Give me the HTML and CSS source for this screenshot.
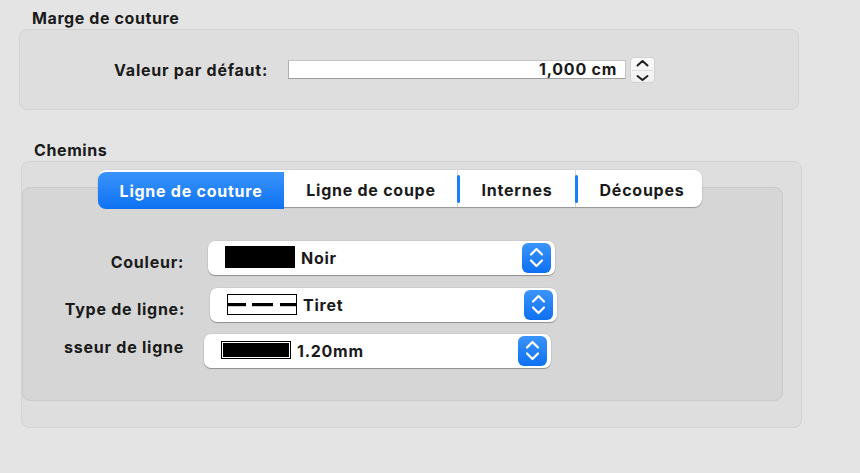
FILE: index.html
```html
<!DOCTYPE html>
<html lang="fr">
<head>
<meta charset="utf-8">
<title>Préférences</title>
<link rel="stylesheet" href="styles.css">
</head>
<body>
<div class="page">
  <h2 class="title title--first">Marge de couture</h2>
  <div class="group group--margin">
    <div class="field-row">
      <label class="field-label">Valeur par défaut:</label>
      <div class="text-input">1,000 cm</div>
      <div class="stepper">
        <svg class="stepper-svg" width="23" height="24" viewBox="0 0 23 24">
          <path d="M6.5 7.5 L11.5 3 L16.5 7.5" fill="none" stroke="#1f1f1f" stroke-width="2" stroke-linecap="round" stroke-linejoin="round"/>
          <path d="M6.5 18 L11.5 22 L16.5 18" fill="none" stroke="#1f1f1f" stroke-width="2" stroke-linecap="round" stroke-linejoin="round"/>
        </svg>
      </div>
    </div>
  </div>

  <h2 class="title title--second">Chemins</h2>
  <div class="group group--paths">
    <div class="tabs">
      <div class="tab tab--active tab--w1">Ligne de couture</div>
      <div class="tab tab--w2">Ligne de coupe</div>
      <div class="tab tab--w3 tab--sep">Internes</div>
      <div class="tab tab--w4 tab--sep">Découpes</div>
    </div>
    <div class="tab-panel">
      <div class="row row--1">
        <div class="row-label">Couleur:</div>
        <div class="popup">
          <span class="swatch"></span>
          <span class="popup-text">Noir</span>
          <span class="popup-btn">
            <svg width="29" height="30" viewBox="0 0 29 30"><path d="M9 11.5 L14.5 6 L20 11.5" fill="none" stroke="#fff" stroke-width="2.2" stroke-linecap="round" stroke-linejoin="round"/><path d="M9 17.5 L14.5 23 L20 17.5" fill="none" stroke="#fff" stroke-width="2.2" stroke-linecap="round" stroke-linejoin="round"/></svg>
          </span>
        </div>
      </div>
      <div class="row row--2">
        <div class="row-label">Type de ligne:</div>
        <div class="popup">
          <svg class="dash-icon" width="70" height="21" viewBox="0 0 70 21">
            <rect x="0.5" y="0.5" width="69" height="20" fill="#fff" stroke="#000" stroke-width="1"/>
            <rect x="0" y="9" width="19" height="3.2" fill="#000"/>
            <rect x="25" y="9" width="21" height="3.2" fill="#000"/>
            <rect x="53" y="9" width="17" height="3.2" fill="#000"/>
          </svg>
          <span class="popup-text">Tiret</span>
          <span class="popup-btn">
            <svg width="29" height="30" viewBox="0 0 29 30"><path d="M9 11.5 L14.5 6 L20 11.5" fill="none" stroke="#fff" stroke-width="2.2" stroke-linecap="round" stroke-linejoin="round"/><path d="M9 17.5 L14.5 23 L20 17.5" fill="none" stroke="#fff" stroke-width="2.2" stroke-linecap="round" stroke-linejoin="round"/></svg>
          </span>
        </div>
      </div>
      <div class="row row--3">
        <div class="row-label">sseur de ligne</div>
        <div class="popup">
          <span class="thick-icon"><span class="thick-fill"></span></span>
          <span class="popup-text">1.20mm</span>
          <span class="popup-btn">
            <svg width="29" height="30" viewBox="0 0 29 30"><path d="M9 11.5 L14.5 6 L20 11.5" fill="none" stroke="#fff" stroke-width="2.2" stroke-linecap="round" stroke-linejoin="round"/><path d="M9 17.5 L14.5 23 L20 17.5" fill="none" stroke="#fff" stroke-width="2.2" stroke-linecap="round" stroke-linejoin="round"/></svg>
          </span>
        </div>
      </div>
    </div>
  </div>
</div>
</body>
</html>
```
FILE: styles.css
```css
* { box-sizing: border-box; }
html, body {
  margin: 0;
  padding: 0;
  background: #e4e4e4;
  width: 860px;
  height: 473px;
  overflow: hidden;
}
body {
  font-family: Inter, "Liberation Sans", sans-serif;
  font-weight: 700;
  font-size: 16px;
  letter-spacing: 0.75px;
  color: #1a1a1a;
}
.page {
  display: flex;
  flex-direction: column;
  align-items: flex-start;
}
.title {
  margin: 0;
  font-size: 16px;
  font-weight: 700;
  line-height: 18px;
  letter-spacing: 0.6px;
}
.title--first { margin: 9px 0 2px 32px; }
.title--second { margin: 31px 0 2px 34px; }

.group {
  background: #dedede;
  border: 1px solid #d3d3d3;
  border-radius: 8px;
}
.group--margin {
  margin-left: 19px;
  width: 780px;
  height: 81px;
  display: flex;
  align-items: center;
}
.field-row {
  display: flex;
  align-items: center;
}
.field-label {
  width: 248px;
  text-align: right;
  margin-right: 20px;
}
.text-input {
  width: 338px;
  height: 19px;
  background: #fff;
  border: 1px solid #c4c4c4;
  border-bottom-color: #9e9e9e;
  border-left-color: #b0b0b0;
  text-align: right;
  padding-right: 8px;
  line-height: 17px;
  font-size: 16px;
}
.stepper {
  margin-left: 4px;
  width: 25px;
  height: 26px;
  background: linear-gradient(#fbfbfb, #f0f0f0);
  border: 1px solid #d2d2d2;
  border-radius: 4px;
  position: relative;
  display: flex;
}
.stepper::after {
  content: "";
  position: absolute;
  left: 1px; right: 1px; top: 12px;
  height: 1px;
  background: #dcdcdc;
}
.stepper-svg { display: block; position: relative; z-index: 1; }

.group--paths {
  margin-left: 21px;
  width: 781px;
  height: 267px;
  padding-top: 8px;
}
.tabs {
  position: relative;
  z-index: 1;
  margin-left: 76px;
  width: 604px;
  height: 37px;
  display: flex;
  background: #fff;
  border-radius: 8px;
  box-shadow: 0 1px 1px rgba(0,0,0,0.28), 0 0 0 0.5px rgba(0,0,0,0.08);
}
.tab {
  position: relative;
  display: flex;
  align-items: center;
  justify-content: center;
  height: 37px;
  padding-top: 2px;
  font-size: 16px;
}
.tab--active {
  margin-top: 2px;
  padding-top: 0;
  color: #fff;
  background: linear-gradient(#3a93fa, #0d72f3);
  border-radius: 8px 0 0 8px;
}
.tab--w1 { width: 186px; }
.tab--w2 { width: 174px; }
.tab--w3 { width: 118px; }
.tab--w4 { width: 126px; padding-left: 6px; }
.tab--sep::before {
  content: "";
  position: absolute;
  left: -1px;
  top: 0;
  bottom: 0;
  width: 1px;
  background: #d8d8d8;
}
.tab--sep::after {
  content: "";
  position: absolute;
  left: -1px;
  top: 5px;
  width: 3px;
  height: 28px;
  border-radius: 2px;
  background: #1a7ff6;
}

.tab-panel {
  margin-top: -20px;
  width: 761px;
  height: 214px;
  background: #d6d6d6;
  border: 1px solid #cacaca;
  border-radius: 8px;
  padding-top: 52px;
}
.row {
  display: flex;
  align-items: center;
  height: 35px;
}
.row--2 { margin-top: 12px; }
.row--3 { margin-top: 11px; }
.row-label {
  width: 161px;
  text-align: right;
  white-space: nowrap;
}
.row--1 .row-label { margin-top: 9px; }
.row--2 .row-label { margin-top: 8px; width: 162px; }
.row--3 .row-label { margin-bottom: 8px; }

.popup {
  display: flex;
  align-items: center;
  width: 347px;
  height: 34px;
  margin-left: 24px;
  padding-left: 17px;
  padding-right: 4px;
  background: #fff;
  border-radius: 7px;
  box-shadow: 0 1px 1px rgba(0,0,0,0.3), 0 0 0 0.5px rgba(0,0,0,0.08);
}
.row--2 .popup { margin-left: 25px; }
.row--3 .popup { margin-left: 20px; }
.swatch {
  display: block;
  width: 70px;
  height: 22px;
  background: #000;
  margin-top: -2px;
}
.dash-icon { display: block; }
.thick-icon {
  display: block;
  width: 70px;
  height: 18px;
  border: 1px solid #000;
  padding: 1px;
  background: #fff;
  margin-top: -1px;
}
.thick-fill {
  display: block;
  width: 100%;
  height: 100%;
  background: #000;
}
.popup-text {
  margin-left: 6px;
  flex: 1;
  font-size: 16px;
}
.popup-btn {
  display: block;
  width: 29px;
  height: 30px;
  border-radius: 6px;
  background: linear-gradient(#3b94fa, #0e70f2);
}
.popup-btn svg { display: block; }
```
